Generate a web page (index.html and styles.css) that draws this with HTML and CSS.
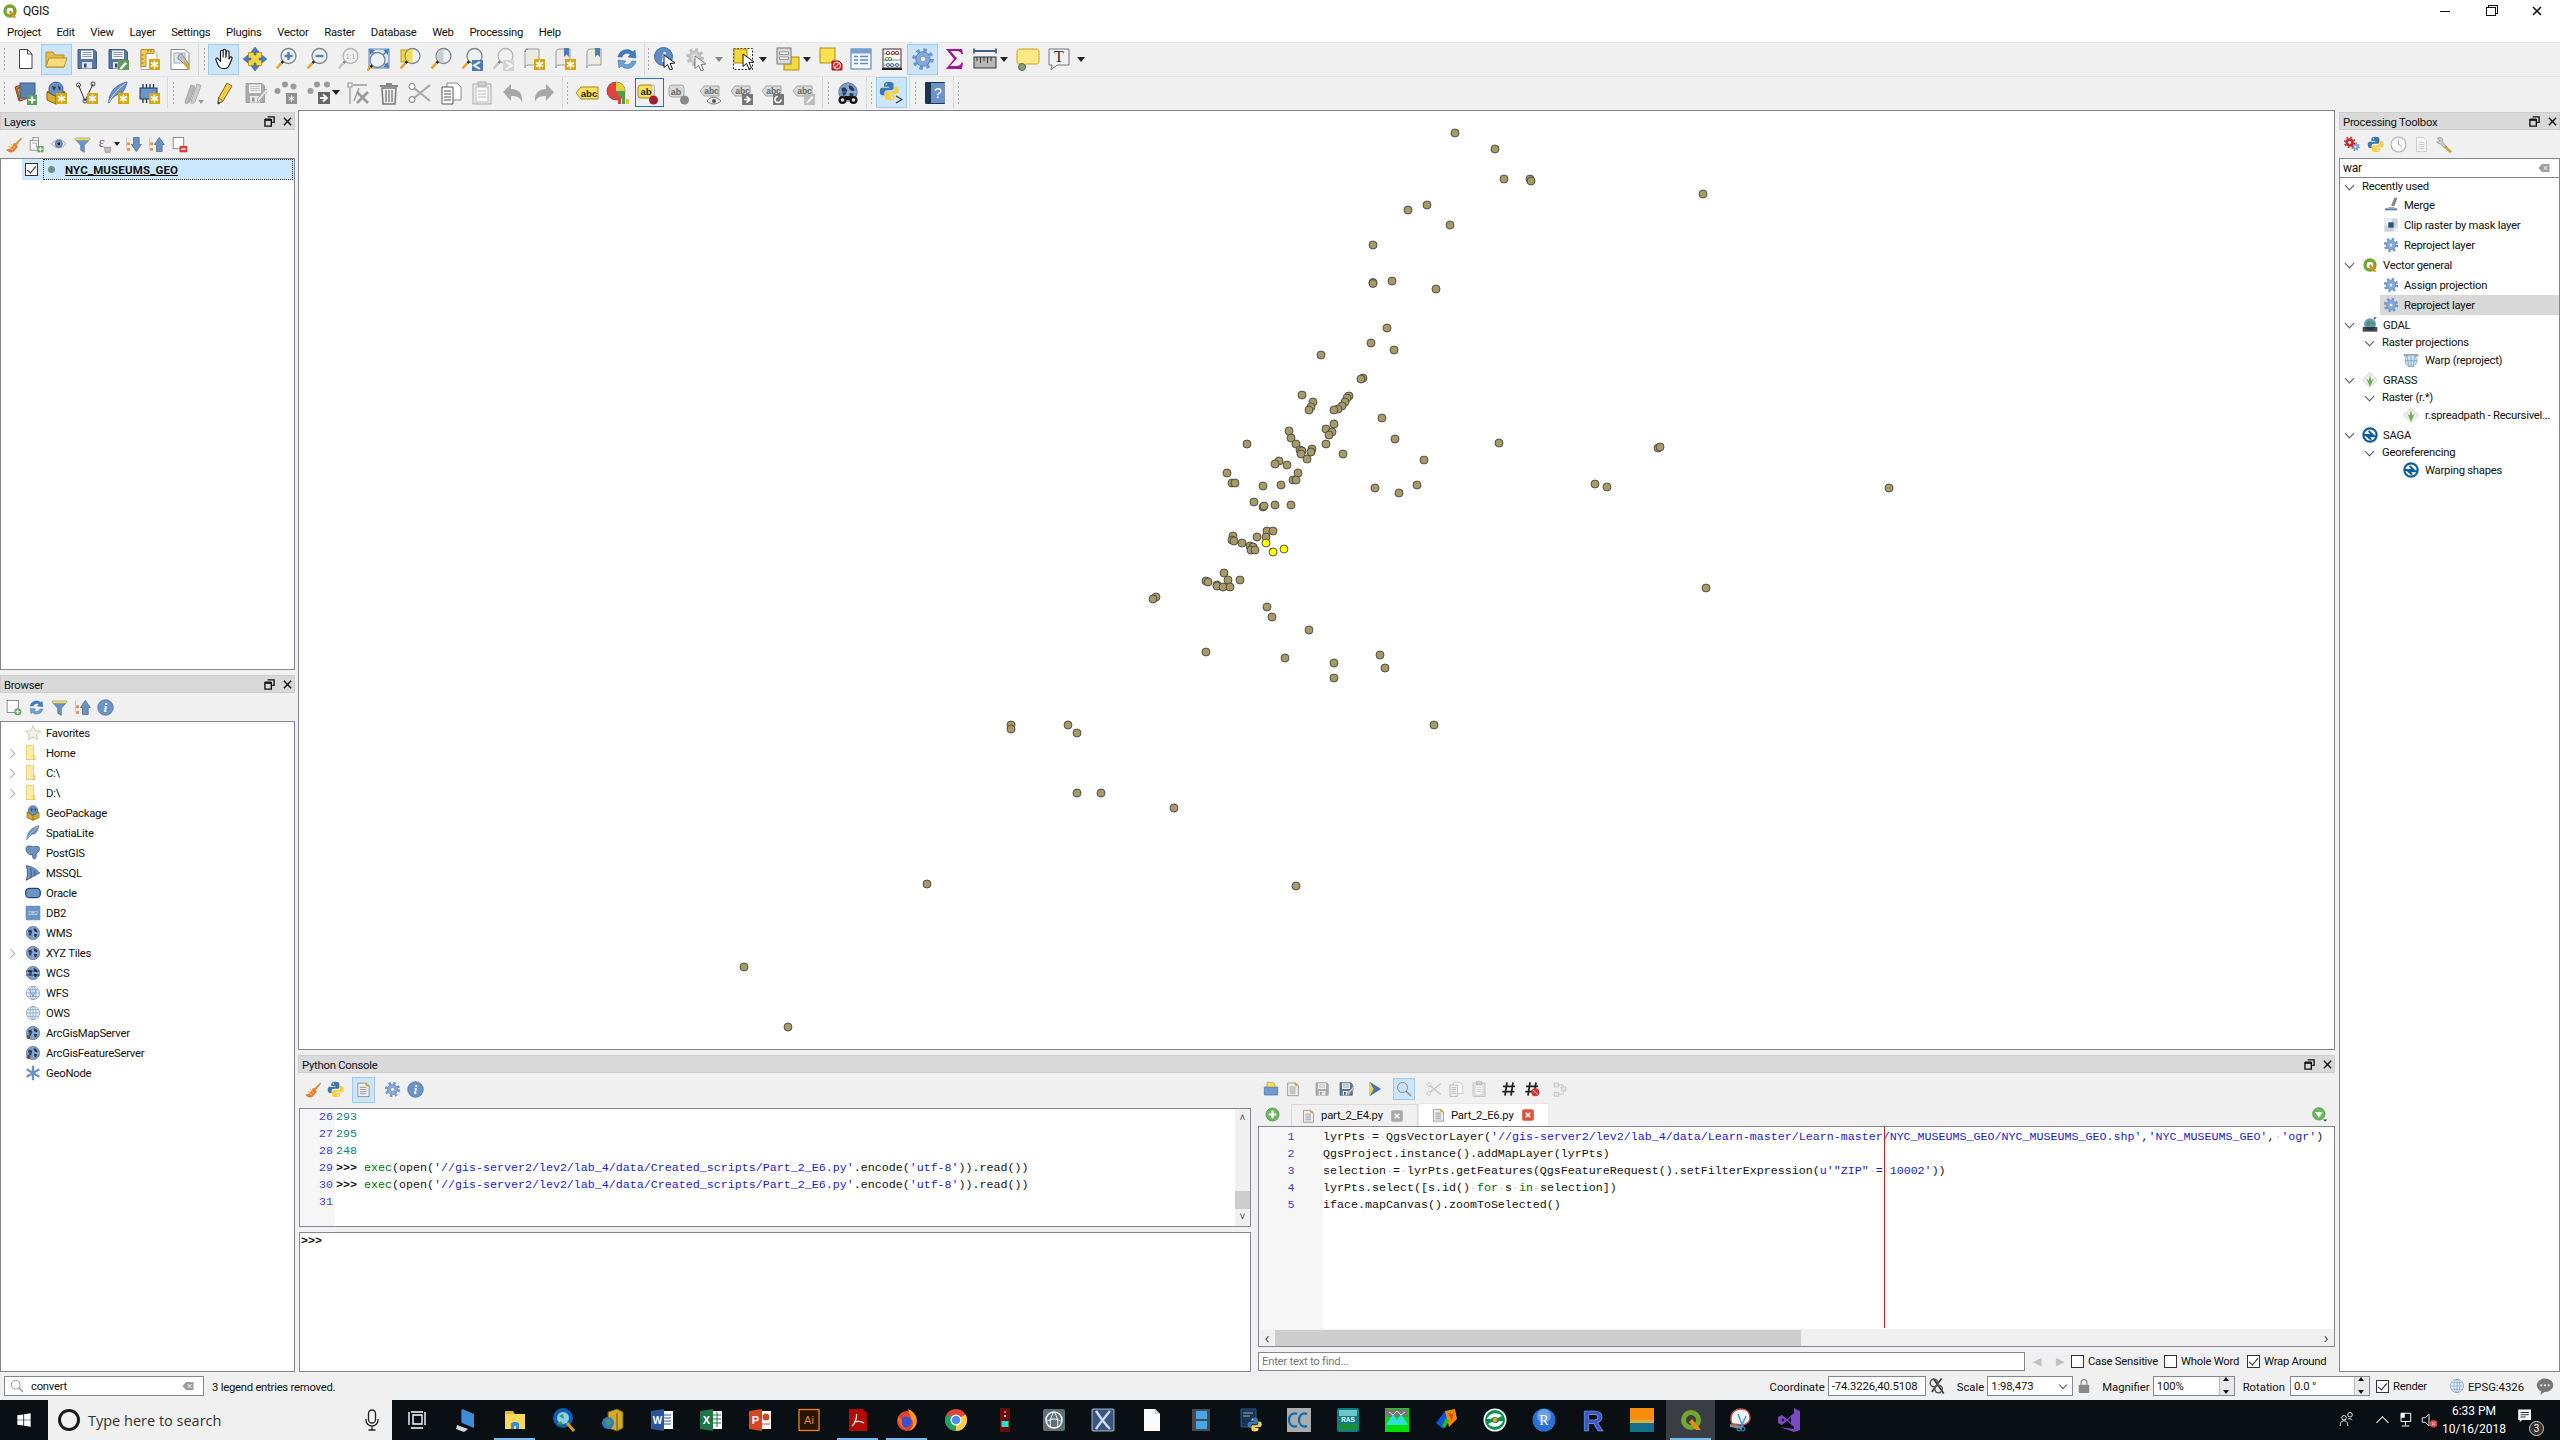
FILE: index.html
```html
<!DOCTYPE html>
<html lang="en">
<head>
<meta charset="utf-8">
<title>QGIS</title>
<link rel="stylesheet" href="styles.css">
</head>
<body>
<svg class="sprite" xmlns="http://www.w3.org/2000/svg">
<symbol id="lens" viewBox="0 0 24 24"><circle cx="14.5" cy="9" r="7.5" fill="#eef1f4" stroke="#7f868c" stroke-width="1.3"/><path d="M9.2 14.3L7.4 16.1" stroke="#222" stroke-width="2.6"/><path d="M7.4 16.1L2.6 21.4" stroke="#e3a72a" stroke-width="2.6"/></symbol>
<symbol id="star" viewBox="0 0 24 24"><rect x="12" y="12" width="11" height="11" fill="#d6a80f"/><path d="M17.5 13.5v8M14 15.5l7 4M21 15.5l-7 4" stroke="#fff" stroke-width="1.5"/></symbol>
<symbol id="gear" viewBox="0 0 24 24"><circle cx="12" cy="12" r="9" fill="none" stroke="#6f97cc" stroke-width="3.6" stroke-dasharray="3.5 3.57"/><circle cx="12" cy="12" r="7.2" fill="#87a9d8" stroke="#5a83ba"/><circle cx="12" cy="12" r="2.8" fill="#eef3fa" stroke="#5a83ba" stroke-width=".7"/></symbol>
<symbol id="globe" viewBox="0 0 24 24"><circle cx="12" cy="12" r="10" fill="#7d9ac4" stroke="#4f6f9e"/><path d="M5 8c3-2 5 0 6 2s-2 4-3 6-3-5-3-8zM13 5c3 0 5 2 6 5-2 2-4 0-5-1s-2-3-1-4zM14 13c2 0 4 0 4 2s-2 4-3 3-2-4-1-5z" fill="#243a5e"/><path d="M2 12h20M12 2v20" stroke="#cdd9ea" stroke-width=".5"/></symbol>
<symbol id="gridglobe" viewBox="0 0 24 24"><circle cx="12" cy="12" r="10" fill="#e8f0f8" stroke="#7d9ac4"/><ellipse cx="12" cy="12" rx="4.5" ry="10" fill="none" stroke="#7d9ac4"/><path d="M2 12h20M3.4 7h17.2M3.4 17h17.2M12 2v20" stroke="#7d9ac4"/></symbol>
<symbol id="new" viewBox="0 0 24 24"><path d="M6.5 2.5h8l4.5 4.5v14.5H6.5z" fill="#fff" stroke="#444" stroke-linejoin="round"/><path d="M14.5 2.5V7H19" fill="none" stroke="#444"/></symbol>
<symbol id="open" viewBox="0 0 24 24"><path d="M2 20V5h7l2 3h9v12z" fill="#e4bb4e" stroke="#b68f27"/><path d="M2 20l3-9h18l-3 9z" fill="#fbdc7c" stroke="#b68f27"/></symbol>
<symbol id="save" viewBox="0 0 24 24"><path d="M3 2.5h16l2.5 2.5v16.5H3z" fill="#56789f" stroke="#3f5e82"/><rect x="6" y="3.5" width="12" height="8.5" fill="#f3f3f3"/><path d="M7.5 5.5h9M7.5 7.5h9M7.5 9.5h9" stroke="#8b9db2"/><rect x="7" y="15" width="10" height="6.5" fill="#dfe4ea"/><rect x="9" y="16.5" width="2.5" height="4" fill="#445"/></symbol>
<symbol id="saveas" viewBox="0 0 24 24"><use href="#save"/><rect x="12" y="13" width="11" height="10" fill="#5d9e5a"/><path d="M14 21l5-6 2 1.5-5 5.5-2.5.5z" fill="#fff"/></symbol>
<symbol id="layout" viewBox="0 0 24 24"><path d="M4 2.5h12l4 4v16H4z" fill="#fff" stroke="#aaa"/><path d="M4 2.5h13v4H9v13H4z" fill="#f1cb5a" stroke="#b99320"/><path d="M4.5 8h2M4.5 12h2M4.5 16h2M11 3v2M14 3v2" stroke="#87691a"/><use href="#star"/></symbol>
<symbol id="layoutm" viewBox="0 0 24 24"><path d="M3 2.5h14l4 4v16H3z" fill="#fff" stroke="#888"/><rect x="6" y="6" width="11" height="10" fill="#dbe6f3" stroke="#9ab"/><path d="M11 8c2-2 4-1 4 1l6 8-2 3-7-7c-2 0-3-2-1-5z" fill="#bfc4c8" stroke="#666" stroke-width=".7"/><path d="M17 14l5 7-2 1.5-5-6z" fill="#d9a62a"/></symbol>
<symbol id="hand" viewBox="0 0 24 24"><path d="M8.5 11V4.5a1.3 1.3 0 012.6 0V10l.1-6.5a1.3 1.3 0 012.6 0l.1 7 .5-5.5a1.3 1.3 0 012.6 0V12l1-1.5c.8-1.2 2.6-.2 2 1-1 2.5-2 5.5-3.5 8-.8 1.3-2 2-3.5 2h-2.5c-2 0-3-1-4-2.5L4 13c-.8-1.5 1-2.5 2-1.5l2.5 3z" fill="#fff" stroke="#111" stroke-width="1.1" stroke-linejoin="round"/></symbol>
<symbol id="pansel" viewBox="0 0 24 24"><rect x="5.5" y="5.5" width="13" height="13" fill="#f3d63c" stroke="#c5a61c"/><path d="M12 0l4 5h-3v3h-2V5H8zM12 24l-4-5h3v-3h2v3h3zM0 12l5-4v3h3v2H5v3zM24 12l-5 4v-3h-3v-2h3V8z" fill="#4d7cb4" stroke="#325a8c" stroke-width=".5"/></symbol>
<symbol id="zin" viewBox="0 0 24 24"><use href="#lens"/><path d="M14.5 5v8M10.5 9h8" stroke="#4f7fb6" stroke-width="2.4"/></symbol>
<symbol id="zout" viewBox="0 0 24 24"><use href="#lens"/><path d="M10.5 9h8" stroke="#4f7fb6" stroke-width="2.4"/></symbol>
<symbol id="z11" viewBox="0 0 24 24"><use href="#lens"/><text x="14.5" y="11.5" class="svgt" font-size="7" text-anchor="middle" fill="#777">1:1</text></symbol>
<symbol id="zfull" viewBox="0 0 24 24"><rect x="2" y="2" width="20" height="19" fill="#dce6f2" stroke="#5b87bc"/><path d="M2 2l6 1-2 2 3 3-1 1-3-3-2 2zM22 2l-1 6-2-2-3 3-1-1 3-3-2-2zM22 21l-6-1 2-2-3-3 1-1 3 3 2-2z" fill="#4d7cb4"/><use href="#lens" x="-4" y="4"/></symbol>
<symbol id="zsel" viewBox="0 0 24 24"><rect x="3" y="3" width="12" height="12" fill="#f3d63c" stroke="#b89c1c"/><use href="#lens"/><path d="M14.5 2a7 7 0 000 14z" fill="#f3d63c" opacity=".85"/></symbol>
<symbol id="zlay" viewBox="0 0 24 24"><use href="#lens"/><path d="M14.5 2a7 7 0 000 14z" fill="#c8cdd2"/></symbol>
<symbol id="zlast" viewBox="0 0 24 24"><use href="#lens"/><path d="M23 13v11H12V13z" fill="#4d7cb4"/><path d="M20 15l-6 3.5 6 3.5" fill="none" stroke="#fff" stroke-width="2"/></symbol>
<symbol id="znext" viewBox="0 0 24 24"><use href="#lens"/><path d="M23 13v11H12V13z" fill="#b9bec4"/><path d="M15 15l6 3.5-6 3.5" fill="none" stroke="#fff" stroke-width="2"/></symbol>
<symbol id="mapv" viewBox="0 0 24 24"><path d="M3 5c0-2 2-3 3-3h11v16H6c-2 0-3 1-3 3z" fill="#eceae5" stroke="#9a9a9a"/><path d="M6 2c-2 0-3 1-3 3" fill="none" stroke="#777"/><use href="#star"/></symbol>
<symbol id="mapb" viewBox="0 0 24 24"><path d="M3 5c0-2 2-3 3-3h11v16H6c-2 0-3 1-3 3z" fill="#eceae5" stroke="#9a9a9a"/><path d="M11 1h5v9l-2.5-2.5L11 10z" fill="#4d7cb4"/></symbol>
<symbol id="map3" viewBox="0 0 24 24"><use href="#mapb"/><use href="#star"/></symbol>
<symbol id="refresh" viewBox="0 0 24 24"><path d="M3 10a9 9 0 0115-5l2-2 1 8-8-1 2.5-2.5A5.5 5.5 0 007 10z" fill="#3f7dc0" stroke="#2d5f97" stroke-width=".5"/><path d="M21 14a9 9 0 01-15 5l-2 2-1-8 8 1-2.5 2.5A5.5 5.5 0 0017 14z" fill="#6ba4d9" stroke="#2d5f97" stroke-width=".5"/></symbol>
<symbol id="cursor" viewBox="0 0 24 24"><path d="M10 9l11 8-5 .5 2.5 5.5-2.5 1-2.5-5.5-3.5 3z" fill="#fff" stroke="#111"/></symbol>
<symbol id="ident" viewBox="0 0 24 24"><circle cx="9.5" cy="9.5" r="9" fill="#5f8cc4" stroke="#3f6ba3"/><text x="9.5" y="15" class="svgt svgi" font-size="15" text-anchor="middle" fill="#fff">i</text><use href="#cursor" y="-1"/></symbol>
<symbol id="action" viewBox="0 0 24 24"><use href="#gear" width="20" height="20"/><circle cx="10" cy="10" r="4" fill="#b8b8b8"/><path d="M8.5 7.5l4 2.5-4 2.5z" fill="#fff"/><use href="#cursor"/></symbol>
<symbol id="select" viewBox="0 0 24 24"><rect x="1.5" y="1.5" width="19" height="21" fill="#fff" stroke="#333" stroke-dasharray="2 1.5"/><rect x="2" y="2" width="13" height="14" fill="#f3d63c" stroke="#a88f1f"/><use href="#cursor" x="1" y="-2"/></symbol>
<symbol id="selform" viewBox="0 0 24 24"><rect x="8" y="10" width="15" height="13" fill="#f5d93c" stroke="#a88f1f"/><rect x="1" y="1" width="14" height="16" fill="#d9d9d9" stroke="#777"/><path d="M3.5 5h9v2.5h-9zM3.5 10h9v2.5h-9z" fill="#fff" stroke="#777" stroke-width=".7"/></symbol>
<symbol id="desel" viewBox="0 0 24 24"><rect x="1" y="1" width="15" height="15" fill="#f7e14d" stroke="#a88f1f"/><path d="M13 23V14h7l3 3v6z" fill="#d8262a" stroke="#a01418"/><circle cx="18" cy="18.5" r="3.5" fill="none" stroke="#fff"/><path d="M15.5 21l5-5" stroke="#fff"/></symbol>
<symbol id="table" viewBox="0 0 24 24"><rect x="2" y="2" width="20" height="20" fill="#f4f7fb" stroke="#5f8cc4" stroke-width="1.2"/><rect x="2" y="2" width="20" height="4.5" fill="#77a0d2"/><path d="M5 9.5h4M5 13h4M5 16.5h4M11 9.5h8M11 13h8M11 16.5h8" stroke="#5f8cc4" stroke-width="1.5"/></symbol>
<symbol id="abacus" viewBox="0 0 24 24"><rect x="3" y="2" width="18" height="19" fill="#fff" stroke="#333"/><path d="M2 22h20" stroke="#222" stroke-width="2"/><path d="M3 7h18M3 13h18M3 18h18" stroke="#888"/><circle cx="8" cy="6" r="1.7" fill="none" stroke="#c0393b"/><circle cx="13" cy="6" r="1.7" fill="none" stroke="#c0393b"/><circle cx="17" cy="6" r="1.7" fill="none" stroke="#c0393b"/><circle cx="7" cy="12" r="1.7" fill="none" stroke="#5a9a48"/><circle cx="10" cy="12" r="1.7" fill="none" stroke="#5a9a48"/><circle cx="8" cy="18" r="1.7" fill="none" stroke="#4f7fb6"/><circle cx="12" cy="18" r="1.7" fill="none" stroke="#4f7fb6"/><circle cx="17" cy="18" r="1.7" fill="none" stroke="#4f7fb6"/></symbol>
<symbol id="sigma" viewBox="0 0 24 24"><path d="M4 2h16l1 5-1.5.2C19 5 17 4 14 4H8.5l6.5 7.5L8 19h6c3 0 5-1 5.5-3.5H21L20 22H4l8-10z" fill="#a0169a"/></symbol>
<symbol id="ruler" viewBox="0 0 24 24"><path d="M1 4h22M1 1.5v5M23 1.5v5" stroke="#3f5f86" stroke-width="1.8" fill="none"/><rect x="1" y="10" width="22" height="11" fill="#b7b7b7" stroke="#333"/><path d="M4 10v4M7.5 10v6M11 10v4M14.5 10v6M18 10v4" stroke="#333"/></symbol>
<symbol id="callout" viewBox="0 0 24 24"><path d="M4 2h16c2 0 3 1 3 3v9c0 2-1 3-3 3H10l-5 3 1-3H4c-2 0-3-1-3-3V5c0-2 1-3 3-3z" fill="#fde985" stroke="#c9a226"/><circle cx="6" cy="20" r="3.5" fill="#7fa56c" stroke="#567"/></symbol>
<symbol id="tbox" viewBox="0 0 24 24"><path d="M2 2h20v16H10l-6 5 1-5H2z" fill="#ecf1f4" stroke="#777"/><text x="12" y="15" class="svgs" font-size="16" text-anchor="middle" fill="#333">T</text></symbol>
<symbol id="dsm" viewBox="0 0 24 24"><path d="M2 6l9-3 4 14-9 3z" fill="#d0793c" stroke="#8d4b22"/><path d="M4 8l8-4 3 13-8 3z" fill="#e4a14c" stroke="#8d4b22"/><rect x="7" y="2" width="15" height="15" fill="#5a82b4" stroke="#3c5f8c"/><rect x="14" y="14" width="10" height="10" fill="#5d9e5a"/><path d="M19 15.5v7M15.5 19h7" stroke="#fff" stroke-width="2"/></symbol>
<symbol id="gpkg" viewBox="0 0 24 24"><path d="M3 11l9-4 9 4v8l-9 4-9-4z" fill="#d6ae2e" stroke="#7a611a"/><path d="M3 11l9 4 9-4M12 15v8" stroke="#7a611a" fill="none"/><circle cx="12" cy="8" r="7" fill="#6e90be" stroke="#3f5f8f"/><path d="M8 5l4 1-2 4zM14 4l3 3-2 3z" fill="#233a5f"/></symbol>
<symbol id="gpkgs" viewBox="0 0 24 24"><use href="#gpkg"/><use href="#star"/></symbol>
<symbol id="shp" viewBox="0 0 24 24"><circle cx="3.5" cy="4" r="2" fill="#fff" stroke="#444"/><circle cx="18" cy="3" r="2" fill="#fff" stroke="#444"/><circle cx="10" cy="20" r="2" fill="#fff" stroke="#444"/><path d="M3.5 4L10 20 18 3" fill="none" stroke="#333"/><use href="#star"/></symbol>
<symbol id="feather" viewBox="0 0 24 24"><path d="M21 1C12 3 6 8 3.5 16L2.5 22l1-.5C6 16 11 13 15 13c3-3 5-7 6-12z" fill="#6e94c4" stroke="#3b5f91" stroke-width=".8"/><path d="M3 21C8 12 13 7 20 2" stroke="#dde6f2" fill="none" stroke-width=".8"/></symbol>
<symbol id="featherS" viewBox="0 0 24 24"><use href="#feather"/><use href="#star"/></symbol>
<symbol id="chip" viewBox="0 0 24 24"><rect x="3" y="7" width="17" height="11" fill="#6d95c7" stroke="#22344f"/><path d="M6 3v4M9.5 3v4M13 3v4M16.5 3v4M6 18v4M9.5 18v4M13 18v4" stroke="#22344f" stroke-width="1.3"/><use href="#star"/></symbol>
<symbol id="pencils" viewBox="0 0 24 24"><path d="M4 21L10 4l4 1.5L8.5 21 5 23z" fill="#8c8c8c" stroke="#666"/><path d="M10 21L16 3l4 1.5L14 21l-3 2z" fill="#b0b0b0" stroke="#777"/></symbol>
<symbol id="pencil" viewBox="0 0 24 24"><path d="M6 23l.5-6L15 2l5 3-9 15z" fill="#f1cb45" stroke="#856b12"/><path d="M6 23l.5-6 4.5 3z" fill="#eed9a6" stroke="#856b12"/><path d="M6 23l.3-2.5 2 1.2z" fill="#222"/></symbol>
<symbol id="saveedit" viewBox="0 0 24 24"><use href="#save"/><path d="M14 22l1-5 8-9 2 2-8 9z" fill="#d6d6d6" stroke="#777"/></symbol>
<symbol id="pts" viewBox="0 0 24 24"><circle cx="11" cy="3.5" r="3" fill="#9a9a9a"/><circle cx="19.5" cy="5.5" r="3" fill="#9a9a9a"/><circle cx="3.5" cy="10" r="3" fill="#9a9a9a"/><rect x="12" y="12" width="11" height="11" fill="#8f8f8f"/><path d="M17.5 14v7M14.5 16l6 3M20.5 16l-6 3" stroke="#fff"/></symbol>
<symbol id="ptsm" viewBox="0 0 24 24"><circle cx="10" cy="3.5" r="3" fill="#9a9a9a"/><circle cx="20" cy="3.5" r="3" fill="#9a9a9a"/><circle cx="3.5" cy="10" r="3" fill="#9a9a9a"/><rect x="11" y="11" width="12" height="12" fill="#666"/><path d="M13 17h5M16 13.5l4 3.5-4 3.5" stroke="#fff" stroke-width="1.8" fill="none"/></symbol>
<symbol id="tools" viewBox="0 0 24 24"><rect x="2" y="2" width="4" height="4" fill="#fff" stroke="#888"/><path d="M7 4h14M4 7v16M8 20l5-13" stroke="#999" stroke-width="1.3"/><path d="M11 11l11 11M22 11L11 22" stroke="#999" stroke-width="2.5"/></symbol>
<symbol id="trash" viewBox="0 0 24 24"><path d="M3 4h18v2H3zM9 2h6v2H9z" fill="#888"/><path d="M5 7h14l-1 16H6z" fill="#eee" stroke="#777" stroke-width="1.5"/><path d="M9 9v12M12 9v12M15 9v12" stroke="#888" stroke-width="1.5"/></symbol>
<symbol id="scis" viewBox="0 0 24 24"><path d="M22 4L6 17M22 20L6 7" stroke="#a8a8a8" stroke-width="2.2"/><circle cx="4" cy="5.5" r="3" fill="#fff" stroke="#777"/><circle cx="4" cy="18.5" r="3" fill="#fff" stroke="#777"/></symbol>
<symbol id="copy" viewBox="0 0 24 24"><path d="M8 2h10l4 4v13H8z" fill="#fff" stroke="#888"/><path d="M3 6h11v17H3z" fill="#fff" stroke="#555"/><path d="M5 10h7M5 13h7M5 16h7M5 19h7" stroke="#555"/></symbol>
<symbol id="paste" viewBox="0 0 24 24"><rect x="3" y="3" width="18" height="20" fill="#e4e4e4" stroke="#777"/><rect x="6" y="6" width="12" height="15" fill="#fff" stroke="#999"/><rect x="8" y="1" width="8" height="4" fill="#bbb" stroke="#777"/><path d="M8 10h8M8 13h8M8 16h8" stroke="#999"/></symbol>
<symbol id="undo" viewBox="0 0 24 24"><path d="M2 11l8-8v5c7 0 12 4 11 13-2-5-5-6-11-6v5z" fill="#a7a7a7"/></symbol>
<symbol id="redo" viewBox="0 0 24 24"><path d="M22 11l-8-8v5C7 8 2 12 3 21c2-5 5-6 11-6v5z" fill="#a7a7a7"/></symbol>
<symbol id="abc" viewBox="0 0 24 24"><path d="M1 12l5-6h17v12H6z" fill="#f8e05c" stroke="#a18a1e"/><text x="14" y="15.5" class="svgt svgb" font-size="9.5" text-anchor="middle" fill="#222">abc</text></symbol>
<symbol id="pie" viewBox="0 0 24 24"><circle cx="10" cy="10" r="9" fill="#e64040" stroke="#333" stroke-width=".6"/><path d="M10 10V1a9 9 0 019 9z" fill="#e2d43a"/><path d="M10 10h9a9 9 0 01-5 8z" fill="#4aa04a"/><rect x="12" y="16" width="3" height="7" fill="#d24040"/><rect x="16" y="13" width="3" height="10" fill="#4aa04a"/><rect x="20" y="18" width="3" height="5" fill="#e2c23a"/></symbol>
<symbol id="labpin" viewBox="0 0 24 24"><rect x="1" y="4" width="16" height="13" rx="3" fill="#f8e05c" stroke="#a18a1e"/><text x="9" y="14" class="svgt svgb" font-size="9.5" text-anchor="middle" fill="#222">ab</text><path d="M15 4h2v12h-2z" fill="#fff" stroke="#999" stroke-width=".6"/><circle cx="16.5" cy="19" r="4.5" fill="#a22029"/></symbol>
<symbol id="labgray" viewBox="0 0 24 24"><path d="M1 10l4-5h15v10H5z" fill="#d8d8d8" stroke="#a5a5a5"/><text x="12.5" y="13" class="svgt svgb" font-size="8.5" text-anchor="middle" fill="#666">abc</text></symbol>
<symbol id="labgray2" viewBox="0 0 24 24"><rect x="1" y="4" width="15" height="12" rx="3" fill="#d8d8d8" stroke="#a5a5a5"/><text x="8" y="13.5" class="svgt svgb" font-size="9" text-anchor="middle" fill="#666">ab</text><circle cx="16.5" cy="19" r="4.5" fill="#8a8a8a"/></symbol>
<symbol id="labeye" viewBox="0 0 24 24"><use href="#labgray"/><path d="M8 20c4-5 9-5 14 0-5 4-10 4-14 0z" fill="#eee" stroke="#777"/><circle cx="15" cy="20" r="2" fill="#555"/></symbol>
<symbol id="labmv" viewBox="0 0 24 24"><use href="#labgray"/><rect x="12" y="13" width="11" height="11" fill="#777"/><path d="M14 18.5h5M16.5 15.5l3.5 3-3.5 3" stroke="#fff" fill="none" stroke-width="1.7"/></symbol>
<symbol id="labrot" viewBox="0 0 24 24"><use href="#labgray"/><rect x="12" y="13" width="11" height="11" fill="#777"/><path d="M20 18.5a3 3 0 11-3-3" stroke="#fff" fill="none" stroke-width="1.5"/></symbol>
<symbol id="labed" viewBox="0 0 24 24"><use href="#labgray"/><rect x="12" y="13" width="11" height="11" fill="#bdbdbd"/><path d="M14 22l6-7 1.5 1.5-6 6z" fill="#fff"/></symbol>
<symbol id="meta" viewBox="0 0 24 24"><use href="#globe" width="22" height="22" x="1"/><circle cx="6.5" cy="19" r="4" fill="#111"/><circle cx="17.5" cy="19" r="4" fill="#111"/><rect x="9" y="15" width="6" height="4" fill="#111"/><circle cx="6.5" cy="19" r="1.8" fill="#ddd"/><circle cx="17.5" cy="19" r="1.8" fill="#ddd"/></symbol>
<symbol id="py" viewBox="0 0 24 24"><path d="M12 1c-4 0-6 1-6 3.5V7h6v1H4C1.5 8 1 10 1 12.5S2 17 4 17h2.500v-3c0-2 1.500-3 3.500-3h5c1.500 0 2.500-1 2.500-2.500V4.500C17.500 2 15.500 1 12 1z" fill="#3f77ad"/><path d="M12.500 23c4 0 6-1 6-3.500V17h-6v-1h8c2.500 0 3-2 3-4.500S22.500 7 20.500 7H18v3c0 2-1.500 3-3.500 3h-5C8 13 7 14 7 15.500v4C7 22 9 23 12.500 23z" fill="#f6cf45"/><circle cx="9" cy="4" r="1" fill="#fff"/><circle cx="15.5" cy="20" r="1" fill="#fff"/></symbol>
<symbol id="pyc" viewBox="0 0 24 24"><use href="#py" width="20" height="20"/><path d="M17 15l6 3.5-6 3.5" fill="none" stroke="#333" stroke-width="1.2"/></symbol>
<symbol id="book" viewBox="0 0 24 24"><rect x="2" y="1" width="20" height="22" rx="1" fill="#1d3450"/><rect x="8" y="2" width="14" height="20" fill="#6c93c3"/><text x="15" y="17" class="svgt" font-size="14" text-anchor="middle" fill="#fff">?</text></symbol>
<symbol id="brush" viewBox="0 0 24 24"><path d="M23 2l-9 9 2.5 2.5L24 4z" fill="#c89540"/><path d="M13 10l5 5-6 7c-4 2-8 0-10-3 4 1 6-1 11-9z" fill="#e67d3c" stroke="#b4592a" stroke-width=".5"/><path d="M5 14l6 6M8 11l6 6" stroke="#f1c24a" stroke-width="1.5"/></symbol>
<symbol id="addgrp" viewBox="0 0 24 24"><rect x="7" y="2" width="8" height="7" fill="#fff" stroke="#777"/><rect x="3" y="6" width="12" height="14" fill="#f4f4f4" stroke="#777"/><path d="M6 10h6v7" fill="none" stroke="#999"/><rect x="13" y="14" width="9" height="9" fill="#6aa466"/><path d="M17.5 15.5v6M14.5 18.5h6" stroke="#fff" stroke-width="1.5"/></symbol>
<symbol id="eye" viewBox="0 0 24 24"><path d="M1 11c6-8 14-8 20 0-6 8-14 8-20 0z" fill="#e6eaee" stroke="#888"/><circle cx="11" cy="11" r="5" fill="#6d93c2" stroke="#3f5f8f"/><circle cx="11" cy="11" r="2" fill="#123"/></symbol>
<symbol id="filter" viewBox="0 0 24 24"><path d="M2 3h20v2l-7.5 8v10l-5-3v-7L2 5z" fill="#6d93c2" stroke="#4a6c9b"/><path d="M2 3h20v3H2z" fill="#f1d653"/></symbol>
<symbol id="eps" viewBox="0 0 24 24"><text x="8" y="15" class="svgs" font-size="20" text-anchor="middle" fill="#7a4a8c">&#949;</text><path d="M12 16h9l-1 7h-7z" fill="#bbb" stroke="#888"/></symbol>
<symbol id="expa" viewBox="0 0 24 24"><path d="M2 3h3M2 3v16h4M2 11h4" stroke="#bba" fill="none"/><rect x="3" y="9" width="4" height="4" fill="#e8923a"/><rect x="3" y="17" width="4" height="4" fill="#e8923a"/><path d="M12 2h8v10h3l-7 10-7-10h3z" fill="#6d93c2" stroke="#3f5f8f"/></symbol>
<symbol id="colla" viewBox="0 0 24 24"><path d="M2 3h3M2 3v16h4M2 11h4" stroke="#bba" fill="none"/><rect x="3" y="9" width="4" height="4" fill="#e8923a"/><rect x="3" y="17" width="4" height="4" fill="#e8923a"/><path d="M12 22h8V12h3L16 2 9 12h3z" fill="#6d93c2" stroke="#3f5f8f"/></symbol>
<symbol id="rmlay" viewBox="0 0 24 24"><rect x="3" y="2" width="15" height="16" fill="#fff" stroke="#666"/><rect x="12" y="14" width="11" height="9" fill="#dd3b3b"/><path d="M14.5 18.5h6" stroke="#fff" stroke-width="2"/></symbol>
<symbol id="addlay" viewBox="0 0 24 24"><rect x="3" y="2" width="16" height="17" fill="#fff" stroke="#666"/><circle cx="18" cy="18" r="5" fill="#6aa466"/><path d="M18 15v6M15 18h6" stroke="#fff" stroke-width="1.5"/></symbol>
<symbol id="info" viewBox="0 0 24 24"><circle cx="12" cy="12" r="11" fill="#6d93c2" stroke="#4a6c9b"/><text x="12" y="18" class="svgt svgi" font-size="17" text-anchor="middle" fill="#fff">i</text></symbol>
<symbol id="pgears" viewBox="0 0 24 24"><use href="#gear" width="14" height="14" x="9" y="8"/><circle cx="8" cy="9" r="6" fill="#c62d2d"/><circle cx="8" cy="9" r="7" fill="none" stroke="#c62d2d" stroke-width="2.5" stroke-dasharray="2.5 3"/><circle cx="8" cy="9" r="2" fill="#fff"/></symbol>
<symbol id="clock" viewBox="0 0 24 24"><circle cx="12" cy="12" r="10.5" fill="#fff" stroke="#aaa" stroke-width="1.5"/><path d="M12 5v7l5 3" fill="none" stroke="#aaa" stroke-width="1.5"/></symbol>
<symbol id="docg" viewBox="0 0 24 24"><path d="M5 2h10l4 4v16H5z" fill="#f5f5f5" stroke="#bbb"/><path d="M8 9h8M8 12h8M8 15h8M8 18h8" stroke="#bbb"/></symbol>
<symbol id="wrench" viewBox="0 0 24 24"><path d="M2 3c3-2 6-1 7 1s1 3 0 4l6 7-3 2-6-6c-2 0-4-1-5-3l3 .5 1.5-2L3 5z" fill="#c6cbcf" stroke="#777" stroke-width=".7"/><path d="M14 14l8 8-2.5 1.5-8-8z" fill="#d9a62a" stroke="#8d6f1a" stroke-width=".5"/></symbol>
<symbol id="qgis" viewBox="0 0 24 24"><path d="M12 2a10 10 0 100 20 10 10 0 000-20zm0 5a5 5 0 110 10 5 5 0 010-10z" fill="#73a82c"/><path d="M13 11l9 11h-5l-7-8z" fill="#eb8c1f"/></symbol>
<symbol id="merge" viewBox="0 0 24 24"><path d="M12 13L17 1h5l-5 13z" fill="#888"/><rect x="3" y="17" width="18" height="3" fill="#5f7fa8"/><path d="M8 15h9v2H8z" fill="#aaa"/></symbol>
<symbol id="clip" viewBox="0 0 24 24"><rect x="2" y="2" width="20" height="20" fill="#c9d4dd"/><rect x="2" y="2" width="11" height="11" fill="#e8edf0"/><rect x="8" y="8" width="8" height="8" fill="#31517a"/><rect x="16" y="16" width="6" height="6" fill="#eef"/></symbol>
<symbol id="gdal" viewBox="0 0 24 24"><circle cx="12" cy="11" r="9" fill="#5f9ccf"/><path d="M6 8l6-2 1 6-5 2zM14 6l5 3-4 5z" fill="#5a8f3c"/><path d="M17 1l5-1-3 4z" fill="#444"/><rect x="1" y="15" width="22" height="7" fill="#1a1a1a" opacity=".8"/></symbol>
<symbol id="warp" viewBox="0 0 24 24"><path d="M1 3h22v4H1z" fill="#9ea9b0"/><circle cx="12" cy="13" r="9" fill="#cfe0ee" stroke="#6e97b9"/><path d="M3 13h18M12 4v18M6 7l3 16M18 7l-3 16" stroke="#6e97b9"/></symbol>
<symbol id="grass" viewBox="0 0 24 24"><path d="M12 1l11 11-11 11L1 12z" fill="#f0f0f0" stroke="#bbb"/><path d="M12 22L6 9l4 4 2-9 2 9 4-4z" fill="#6ab04a"/></symbol>
<symbol id="saga" viewBox="0 0 24 24"><circle cx="12" cy="12" r="10" fill="none" stroke="#0f5c96" stroke-width="3.2"/><path d="M2 12h14l-6-6M22 14H8l6 5" fill="none" stroke="#0f5c96" stroke-width="3"/></symbol>
<symbol id="fav" viewBox="0 0 24 24"><path d="M12 1l3.3 7.5 8 .7-6 5.3 1.800 8L12 18.300 4.900 22.500l1.800-8-6-5.300 8-.7z" fill="#f3f1e8" stroke="#b4b2a2"/></symbol>
<symbol id="dirs" viewBox="0 0 24 24"><rect x="2" y="1" width="11" height="21" fill="#fde9a8" stroke="#e0bf55"/><rect x="13" y="16" width="2" height="6" fill="#fde9a8" stroke="#e0bf55"/></symbol>
<symbol id="pg" viewBox="0 0 24 24"><path d="M3 2c5-1 8 0 9 1 3-2 7-1 9 0 2 3 0 8-4 9 0 3 0 9-3 9-2 0-3-3-3-7-3 2-6 0-8-3C1 8 1 4 3 2z" fill="#6d93c2" stroke="#24476e"/></symbol>
<symbol id="mssql" viewBox="0 0 24 24"><path d="M2 1c8 1 14 4 20 11-6 3-13 7-20 11 2-8 2-14 0-22z" fill="#6d93c2" stroke="#1b3a5c"/><path d="M8 5c2 4 2 10 0 14M14 8c1 3 1 6 0 8" stroke="#1b3a5c" fill="none"/></symbol>
<symbol id="oracle" viewBox="0 0 24 24"><rect x="1" y="5" width="22" height="14" rx="6" fill="#6d93c2" stroke="#24476e" stroke-width="1.8"/></symbol>
<symbol id="db2" viewBox="0 0 24 24"><rect x="1" y="1" width="22" height="22" rx="2" fill="#6d93c2"/><text x="12" y="15" class="svgt" font-size="7.5" text-anchor="middle" fill="#dbe7f5">DB2</text></symbol>
<symbol id="wcs" viewBox="0 0 24 24"><use href="#globe"/><path d="M2 9h20M2 15h20" stroke="#123" stroke-width="1"/></symbol>
<symbol id="wfs" viewBox="0 0 24 24"><use href="#gridglobe"/><path d="M7 7l5 10 5-10" fill="none" stroke="#7d9ac4" stroke-width="1.5"/></symbol>
<symbol id="arc" viewBox="0 0 24 24"><use href="#globe"/><circle cx="5" cy="18" r="3" fill="#555"/></symbol>
<symbol id="geonode" viewBox="0 0 24 24"><path d="M12 1v22M2.5 6.5l19 11M21.500 6.500l-19 11" stroke="#6d93c2" stroke-width="3.5"/></symbol>
<symbol id="mini" viewBox="0 0 24 24"><path d="M4 3h12l4 4v15H4z" fill="#eee" stroke="#777"/><path d="M7 9h9M7 12h9M7 15h9M7 18h9" stroke="#777"/><path d="M15 2l5 5-3 1-3-3z" fill="#d9a62a"/></symbol>
<symbol id="mopen" viewBox="0 0 24 24"><path d="M2 21V9h20v12z" fill="#6d9bd2" stroke="#3f6ba3"/><path d="M6 9V2h9l3 3v4z" fill="#f5d96a" stroke="#b69a2d"/></symbol>
<symbol id="play" viewBox="0 0 24 24"><path d="M4 1l17 11L4 23z" fill="#4773b0"/><path d="M4 1v22l6-11z" fill="#f1cf55"/></symbol>
<symbol id="hash" viewBox="0 0 24 24"><path d="M9 2L6 22M18 2l-3 20M3 8h18M2 16h18" stroke="#222" stroke-width="2.6"/></symbol>
<symbol id="hashx" viewBox="0 0 24 24"><use href="#hash"/><circle cx="17" cy="17" r="6" fill="#d33"/><path d="M14 14l6 6" stroke="#fff" stroke-width="1.5"/></symbol>
<symbol id="branch" viewBox="0 0 24 24"><path d="M3 3h7v6H3zM14 9h7v6h-7zM3 17h7v6H3z" fill="#ddd" stroke="#888"/><path d="M10 6h7v3M10 20h7v-5" fill="none" stroke="#888"/></symbol>
<symbol id="grnplus" viewBox="0 0 24 24"><circle cx="12" cy="12" r="10.5" fill="#6cb85c" stroke="#48853d"/><path d="M12 6v12M6 12h12" stroke="#fff" stroke-width="3.5"/></symbol>
<symbol id="grndn" viewBox="0 0 24 24"><circle cx="11" cy="11" r="10" fill="#6cb85c" stroke="#48853d"/><path d="M5 8h12l-6 9z" fill="#fff"/><path d="M18 20h6l-3 3z" fill="#222"/></symbol>
<symbol id="gclose" viewBox="0 0 24 24"><rect x="2" y="2" width="20" height="20" rx="3" fill="#a8a8a8"/><path d="M8 8l8 8M16 8l-8 8" stroke="#fff" stroke-width="2.6"/></symbol>
<symbol id="rclose" viewBox="0 0 24 24"><rect x="2" y="2" width="20" height="20" rx="3" fill="#d9543a"/><path d="M8 8l8 8M16 8l-8 8" stroke="#fff" stroke-width="2.6"/></symbol>
<symbol id="clear" viewBox="0 0 24 24"><path d="M1 12l7-8h15v16H8z" fill="#9c9c9c"/><path d="M11 8l8 8M19 8l-8 8" stroke="#fff" stroke-width="2"/></symbol>
<symbol id="float" viewBox="0 0 12 12"><path d="M4 1h7v6H9M1 4h7v7H1z" fill="none" stroke="#111" stroke-width="1.5"/><path d="M1 4h7" stroke="#111" stroke-width="2.5"/></symbol>
<symbol id="close" viewBox="0 0 12 12"><path d="M2 2l8 8M10 2l-8 8" stroke="#111" stroke-width="1.6"/></symbol>
<symbol id="search" viewBox="0 0 16 16"><circle cx="6.5" cy="6.5" r="5" fill="none" stroke="#888"/><path d="M10 10l5 5" stroke="#888" stroke-width="1.3"/></symbol>
<symbol id="lock" viewBox="0 0 24 24"><rect x="3" y="10" width="18" height="14" rx="2" fill="#888"/><path d="M7 10V6a5 5 0 0110 0v4" fill="none" stroke="#888" stroke-width="2"/></symbol>
<symbol id="crs" viewBox="0 0 24 24"><path d="M7 2l14 20M18 2L5 20" stroke="#333" stroke-width="2"/><circle cx="8" cy="8" r="5" fill="none" stroke="#555" stroke-width="2"/><circle cx="14" cy="16" r="5" fill="none" stroke="#555" stroke-width="2"/></symbol>
<symbol id="mesg" viewBox="0 0 24 24"><path d="M12 2c6 0 11 4 11 9s-5 9-11 9h-1l-5 4 1-5c-3-1-6-4-6-8 0-5 5-9 11-9z" fill="#777"/><circle cx="7" cy="11" r="1.5" fill="#fff"/><circle cx="12" cy="11" r="1.5" fill="#fff"/><circle cx="17" cy="11" r="1.5" fill="#fff"/></symbol>
<symbol id="win" viewBox="0 0 24 24"><path d="M2 5l9-1.3V11.500H2zM12.200 3.500L22 2v9.500h-9.800zM2 12.500h9v7.800l-9-1.300zM12.200 12.500H22V22l-9.800-1.400z" fill="#fff"/></symbol>
<symbol id="mic" viewBox="0 0 24 24"><rect x="8.5" y="2" width="7" height="13" rx="3.5" fill="none" stroke="#222" stroke-width="1.3"/><path d="M6 11v1a6 6 0 0012 0v-1M12 18v4M8.500 22h7" fill="none" stroke="#222" stroke-width="1.3"/></symbol>
<symbol id="tv" viewBox="0 0 24 24"><path d="M6 4h12M8 7h9v9H8zM20 4v13M4 4v13M6 20h12" fill="none" stroke="#fff" stroke-width="1.4"/></symbol>
<symbol id="tb1" viewBox="0 0 24 24"><path d="M8 1l12 5v14L8 15z" fill="#3f8fd8"/><path d="M8 1v14l-1-1V2z" fill="#1e5fa0"/><path d="M3 17l11 4-4 3-8-3z" fill="#d8d8d8"/></symbol>
<symbol id="tb2" viewBox="0 0 24 24"><path d="M2 6V3h8l2 3z" fill="#e2b43a"/><rect x="2" y="6" width="20" height="15" fill="#fbd75c"/><path d="M8 21v-5c0-1 1-2 4-2s4 1 4 2v5h-3v-3h-2v3z" fill="#2d8fd5"/></symbol>
<symbol id="tb3" viewBox="0 0 24 24"><circle cx="11" cy="10" r="10" fill="#0d5fb0"/><circle cx="11" cy="10" r="6" fill="#8ccdf0"/><path d="M7 8l4-2 1 5zM5 16l4-3 2 4z" fill="#3f9a4a"/><path d="M15 15l7 8" stroke="#d79a2a" stroke-width="3"/></symbol>
<symbol id="tb4" viewBox="0 0 24 24"><path d="M7 4l9-3 6 3v16l-6 3-9-3z" fill="#d2a92a" stroke="#6e5611"/><path d="M16 5v18" stroke="#6e5611"/><circle cx="7" cy="15" r="6" fill="#2e7cc2"/><path d="M4 13l4-2 2 4-3 3z" fill="#4a9a4a"/></symbol>
<symbol id="tbw" viewBox="0 0 24 24"><rect x="9" y="3" width="14" height="18" fill="#fff"/><path d="M11 7h10M11 10h10M11 13h10M11 16h10" stroke="#2b579a"/><path d="M1 3l13-2v22L1 21z" fill="#2b579a"/><text x="7.5" y="16" class="svgt svgb" font-size="10" text-anchor="middle" fill="#fff">W</text></symbol>
<symbol id="tbx" viewBox="0 0 24 24"><rect x="9" y="3" width="14" height="18" fill="#fff"/><path d="M14 7h8M14 11h8M14 15h8M18 4v15" stroke="#217346"/><path d="M1 3l13-2v22L1 21z" fill="#217346"/><text x="7.5" y="16" class="svgt svgb" font-size="11" text-anchor="middle" fill="#fff">X</text></symbol>
<symbol id="tbp" viewBox="0 0 24 24"><rect x="9" y="3" width="14" height="18" fill="#fff"/><circle cx="18" cy="9" r="3.5" fill="#d24726"/><path d="M14 16h8" stroke="#d24726"/><path d="M1 3l13-2v22L1 21z" fill="#d24726"/><text x="7.5" y="16" class="svgt svgb" font-size="11" text-anchor="middle" fill="#fff">P</text></symbol>
<symbol id="tbai" viewBox="0 0 24 24"><rect x="2" y="1.5" width="20" height="21" fill="#2a1402" stroke="#e8821a" stroke-width="1.3"/><text x="12" y="16" class="svgt" font-size="11" text-anchor="middle" fill="#e8821a">Ai</text></symbol>
<symbol id="tbpdf" viewBox="0 0 24 24"><path d="M3 1h14l4 4v18H3z" fill="#b30b00"/><path d="M6 18c3-2 5-8 4.5-12M8 14c4-1 7-1 10 1" fill="none" stroke="#fff" stroke-width="1.2"/></symbol>
<symbol id="tbff" viewBox="0 0 24 24"><circle cx="12" cy="13" r="10" fill="#e0452c"/><circle cx="11" cy="14" r="5.5" fill="#3d4fd0"/><path d="M13 1c7 3 10 9 8 15-1 4-4 6-7 7 4-3 5-8 3-11-1-3-3-6-4-11z" fill="#fd9a1e"/><path d="M3 9c0 6 3 11 9 13-5-3-6-7-5-10z" fill="#fd6a2a"/></symbol>
<symbol id="tbch" viewBox="0 0 24 24"><circle cx="12" cy="12" r="11" fill="#de4636"/><path d="M12 12L2.5 6.5A11 11 0 0012 23z" fill="#1da462"/><path d="M12 12v11A11 11 0 0023 12c0-2-.5-3.5-1.500-5.500z" fill="#ffce42"/><circle cx="12" cy="12" r="5.5" fill="#fff"/><circle cx="12" cy="12" r="4.3" fill="#4c8bf5"/></symbol>
<symbol id="tbrd" viewBox="0 0 24 24"><rect x="7" y="0" width="10" height="24" fill="#6e0b0b"/><rect x="8.5" y="13" width="7" height="6" fill="#28e0d8"/><circle cx="12" cy="8" r="1" fill="#eee"/><circle cx="12" cy="4" r=".8" fill="#eee"/></symbol>
<symbol id="tbsph" viewBox="0 0 24 24"><rect x="1" y="1" width="22" height="22" rx="2" fill="#5e6f78"/><circle cx="12" cy="12" r="8" fill="none" stroke="#fff" stroke-width="1.5"/><path d="M4 14c5-4 11-4 16 0M12 4c-3 4-5 10-3 16M12 4c3 4 5 10 3 16" fill="none" stroke="#fff"/></symbol>
<symbol id="tbx2" viewBox="0 0 24 24"><rect x="1" y="1" width="22" height="22" rx="1" fill="#3a557f" stroke="#c8d4e4" stroke-width=".8"/><path d="M5 3c4 6 9 13 14 18M19 3C15 8 9 15 5 21" stroke="#cfd9e8" stroke-width="2.4" fill="none"/></symbol>
<symbol id="tbdoc" viewBox="0 0 24 24"><path d="M4 1h11l5 5v17H4z" fill="#fafafa"/><path d="M15 1v5h5" fill="#d0d0d0"/></symbol>
<symbol id="tbfilm" viewBox="0 0 24 24"><rect x="3" y="1" width="18" height="22" fill="#4a4a4a"/><rect x="7" y="3" width="11" height="8" fill="#46a6ea"/><rect x="7" y="13" width="11" height="8" fill="#46a6ea"/></symbol>
<symbol id="tbpyf" viewBox="0 0 24 24"><path d="M3 1h15v18H3z" fill="#1c3353" stroke="#2a5a9a"/><path d="M5 5h10M5 8h7" stroke="#8bb"/><use href="#py" width="15" height="15" x="9" y="9"/></symbol>
<symbol id="tbcc" viewBox="0 0 24 24"><rect x="0" y="0" width="24" height="24" fill="#a9adb0"/><path d="M10 6c-5-2-8 2-8 6s3 8 8 6M20 6c-5-2-8 2-8 6s3 8 8 6" fill="none" stroke="#1069ad" stroke-width="2.2"/></symbol>
<symbol id="tbras" viewBox="0 0 24 24"><rect x="1" y="0" width="22" height="24" rx="2" fill="#0b7d83"/><rect x="3" y="2" width="18" height="6" fill="#6ec6c9"/><text x="12" y="14" class="svgt svgb" font-size="6.5" text-anchor="middle" fill="#fff">RAS</text><rect x="3" y="16" width="18" height="6" fill="#1a8f3a"/></symbol>
<symbol id="tbmt" viewBox="0 0 24 24"><rect x="0" y="0" width="24" height="24" fill="#00e000"/><rect x="1" y="1" width="22" height="8" fill="#777"/><path d="M1 17L8 6l4 6 4-6 7 11z" fill="#2fdcd8"/><path d="M4 4l4 3 4-4 4 4 4-3" stroke="#ddd" fill="none"/></symbol>
<symbol id="tb3d" viewBox="0 0 24 24"><path d="M9 21L2 15l9-12 6 2z" fill="#0b57d8"/><path d="M11 3l10-2 2 10-8 8z" fill="#f2840f"/><path d="M8 18l4-8 3 3-4 7z" fill="#1cc21c"/><path d="M14 5l5 1-1 7z" fill="#c9501a"/></symbol>
<symbol id="tbgc" viewBox="0 0 24 24"><circle cx="12" cy="12" r="11.5" fill="#fff"/><circle cx="12" cy="12" r="10" fill="#0a8f4a"/><path d="M4 11c2-6 10-8 15-3l-4 2c-3-2-6-1-7 1zM20 13c-2 6-10 8-15 3l4-2c3 2 6 1 7-1z" fill="#fff"/><circle cx="12" cy="12" r="2.2" fill="#f0a23a"/></symbol>
<symbol id="tbr1" viewBox="0 0 24 24"><circle cx="12" cy="12" r="11.5" fill="#2c6fd0"/><circle cx="12" cy="8" r="7" fill="#7fb4ea" opacity=".7"/><text x="12" y="17" class="svgs" font-size="14" text-anchor="middle" fill="#fff">R</text></symbol>
<symbol id="tbr2" viewBox="0 0 24 24"><text x="12" y="23" class="svgt svgb" font-size="29" text-anchor="middle" fill="#3d55c9" stroke="#8fa3ee" stroke-width=".6">R</text></symbol>
<symbol id="tbgrad" viewBox="0 0 24 24"><rect y="0" width="24" height="12" fill="#f88a0c"/><rect y="12" width="24" height="3" fill="#d9b040"/><rect y="15" width="24" height="9" fill="#14708a"/></symbol>
<symbol id="tbsnip" viewBox="0 0 24 24"><path d="M3 10c0-6 5-9 10-9 6 0 9 4 9 9s-6 7-8 7l-9-1c-2 0-2-4-2-6z" fill="#f2f2f2" stroke="#c45050" stroke-width="1.4"/><path d="M2 16l12 2v3L2 19z" fill="#8a8a8a"/><path d="M10 6l5 13M18 8l-5 11" stroke="#3a9ed8" stroke-width="1.5"/><circle cx="15" cy="21" r="2" fill="none" stroke="#3a9ed8"/><circle cx="11" cy="21" r="2" fill="none" stroke="#3a9ed8"/></symbol>
<symbol id="tbvs" viewBox="0 0 24 24"><path d="M17 0l6 3v19l-6 2-14-5 14 2zM1 9l4-2 5 4 7-6v14l-7-6-5 4-4-2zM5 10v4l2.5-2zM14 9l-3 3 3 3z" fill="#7a48c0"/></symbol>
<symbol id="people" viewBox="0 0 24 24"><circle cx="8" cy="9" r="3" fill="none" stroke="#fff" stroke-width="1.2"/><path d="M3 20c0-5 2-7 5-7s5 2 5 7" fill="none" stroke="#fff" stroke-width="1.2"/><circle cx="16" cy="5" r="3" fill="none" stroke="#fff" stroke-width="1.2"/><path d="M13 11c1-1 5-1 6 1" fill="none" stroke="#fff" stroke-width="1.2"/></symbol>
<symbol id="net" viewBox="0 0 24 24"><path d="M4 3h13v11H4zM10 14v5M5 20h10" fill="none" stroke="#fff" stroke-width="1.3"/><path d="M4 3h5v6H4z" fill="#fff"/></symbol>
<symbol id="vol" viewBox="0 0 24 24"><path d="M3 9h4l5-5v16l-5-5H3z" fill="none" stroke="#fff" stroke-width="1.2"/><circle cx="18" cy="17" r="5" fill="#e04141"/><path d="M16 15l4 4M20 15l-4 4" stroke="#fff" stroke-width="1.2"/></symbol>
<symbol id="note" viewBox="0 0 24 24"><path d="M3 2h17v14H8l-3 3v-3H3z" fill="#fff"/><path d="M6 6h11M6 9h11M6 12h7" stroke="#0a0f14" stroke-width="1.2"/></symbol>
</svg>

<header class="titlebar">
  <svg class="ic16"><use href="#qgis"/></svg>
  <span class="apptitle">QGIS</span>
  <div class="winctl">
    <span class="wbtn"><span class="wmin"></span></span>
    <span class="wbtn"><span class="wres"></span></span>
    <span class="wbtn"><svg class="ic12"><use href="#close"/></svg></span>
  </div>
</header>

<nav class="menubar">
  <span>Project</span><span>Edit</span><span>View</span><span>Layer</span><span>Settings</span><span>Plugins</span><span>Vector</span><span>Raster</span><span>Database</span><span>Web</span><span>Processing</span><span>Help</span>
</nav>

<div class="toolbar row1">
  <i class="grip"></i>
  <b class="tb"><svg><use href="#new"/></svg></b>
  <b class="tb on"><svg><use href="#open"/></svg></b>
  <b class="tb"><svg><use href="#save"/></svg></b>
  <b class="tb"><svg><use href="#saveas"/></svg></b>
  <b class="tb"><svg><use href="#layout"/></svg></b>
  <b class="tb"><svg><use href="#layoutm"/></svg></b>
  <i class="sep"></i><i class="grip"></i>
  <b class="tb on"><svg><use href="#hand"/></svg></b>
  <b class="tb"><svg><use href="#pansel"/></svg></b>
  <b class="tb"><svg><use href="#zin"/></svg></b>
  <b class="tb"><svg><use href="#zout"/></svg></b>
  <b class="tb off"><svg><use href="#z11"/></svg></b>
  <b class="tb"><svg><use href="#zfull"/></svg></b>
  <b class="tb"><svg><use href="#zsel"/></svg></b>
  <b class="tb"><svg><use href="#zlay"/></svg></b>
  <b class="tb"><svg><use href="#zlast"/></svg></b>
  <b class="tb off"><svg><use href="#znext"/></svg></b>
  <b class="tb"><svg><use href="#mapv"/></svg></b>
  <b class="tb"><svg><use href="#map3"/></svg></b>
  <b class="tb"><svg><use href="#mapb"/></svg></b>
  <b class="tb"><svg><use href="#refresh"/></svg></b>
  <i class="sep t"></i><i class="grip t"></i>
  <b class="tb"><svg><use href="#ident"/></svg></b>
  <b class="tb drop w47 gray"><svg class="off"><use href="#action"/></svg></b>
  <b class="tb drop w44"><svg><use href="#select"/></svg></b>
  <b class="tb drop w45"><svg><use href="#selform"/></svg></b>
  <b class="tb w28"><svg><use href="#desel"/></svg></b>
  <b class="tb"><svg><use href="#table"/></svg></b>
  <b class="tb"><svg><use href="#abacus"/></svg></b>
  <b class="tb on"><svg><use href="#gear"/></svg></b>
  <b class="tb"><svg><use href="#sigma"/></svg></b>
  <b class="tb drop w43"><svg><use href="#ruler"/></svg></b>
  <b class="tb"><svg><use href="#callout"/></svg></b>
  <b class="tb drop w47"><svg><use href="#tbox"/></svg></b>
</div>

<div class="toolbar row2">
  <i class="grip"></i>
  <b class="tb"><svg><use href="#dsm"/></svg></b>
  <b class="tb"><svg><use href="#gpkgs"/></svg></b>
  <b class="tb"><svg><use href="#shp"/></svg></b>
  <b class="tb"><svg><use href="#featherS"/></svg></b>
  <b class="tb"><svg><use href="#chip"/></svg></b>
  <i class="sep"></i><i class="grip"></i>
  <b class="tb small off"><svg><use href="#pencils"/></svg></b>
  <b class="tb"><svg><use href="#pencil"/></svg></b>
  <b class="tb off"><svg><use href="#saveedit"/></svg></b>
  <b class="tb w33"><svg><use href="#pts"/></svg></b>
  <b class="tb drop w39"><svg><use href="#ptsm"/></svg></b>
  <b class="tb"><svg><use href="#tools"/></svg></b>
  <b class="tb"><svg><use href="#trash"/></svg></b>
  <b class="tb"><svg><use href="#scis"/></svg></b>
  <b class="tb"><svg><use href="#copy"/></svg></b>
  <b class="tb off"><svg><use href="#paste"/></svg></b>
  <b class="tb"><svg><use href="#undo"/></svg></b>
  <b class="tb"><svg><use href="#redo"/></svg></b>
  <i class="sep"></i><i class="grip"></i>
  <b class="tb"><svg><use href="#abc"/></svg></b>
  <b class="tb"><svg><use href="#pie"/></svg></b>
  <b class="tb sel"><svg><use href="#labpin"/></svg></b>
  <b class="tb"><svg><use href="#labgray2"/></svg></b>
  <b class="tb"><svg><use href="#labeye"/></svg></b>
  <b class="tb"><svg><use href="#labmv"/></svg></b>
  <b class="tb"><svg><use href="#labrot"/></svg></b>
  <b class="tb"><svg><use href="#labed"/></svg></b>
  <i class="sep"></i><i class="grip"></i>
  <b class="tb"><svg><use href="#meta"/></svg></b>
  <i class="sep"></i><i class="grip"></i>
  <b class="tb on"><svg><use href="#pyc"/></svg></b>
  <i class="sep"></i><i class="grip"></i>
  <b class="tb"><svg><use href="#book"/></svg></b>
  <i class="sep"></i><i class="grip"></i>
</div>

<main class="workspace">
  <aside class="col-left">
    <section class="dock layers">
      <div class="dtitle"><span>Layers</span><svg class="dbtn"><use href="#float"/></svg><svg class="dbtn"><use href="#close"/></svg></div>
      <div class="dtools">
        <b class="st"><svg><use href="#brush"/></svg></b>
        <b class="st"><svg><use href="#addgrp"/></svg></b>
        <b class="st"><svg><use href="#eye"/></svg></b>
        <b class="st"><svg><use href="#filter"/></svg></b>
        <b class="st stdrop"><svg><use href="#eps"/></svg></b>
        <b class="st"><svg><use href="#expa"/></svg></b>
        <b class="st"><svg><use href="#colla"/></svg></b>
        <b class="st"><svg><use href="#rmlay"/></svg></b>
      </div>
      <div class="tree">
        <div class="layerrow">
          <span class="chk on"></span>
          <span class="laydot"></span>
          <span class="layname">NYC_MUSEUMS_GEO</span>
        </div>
      </div>
    </section>
    <section class="dock browser">
      <div class="dtitle"><span>Browser</span><svg class="dbtn"><use href="#float"/></svg><svg class="dbtn"><use href="#close"/></svg></div>
      <div class="dtools">
        <b class="st"><svg><use href="#addlay"/></svg></b>
        <b class="st"><svg><use href="#refresh"/></svg></b>
        <b class="st"><svg><use href="#filter"/></svg></b>
        <b class="st"><svg><use href="#colla"/></svg></b>
        <b class="st"><svg><use href="#info"/></svg></b>
      </div>
      <div class="tree btree">
        <div class="brow"><svg><use href="#fav"/></svg>Favorites</div>
        <div class="brow exp"><svg><use href="#dirs"/></svg>Home</div>
        <div class="brow exp"><svg><use href="#dirs"/></svg>C:\</div>
        <div class="brow exp"><svg><use href="#dirs"/></svg>D:\</div>
        <div class="brow"><svg><use href="#gpkg"/></svg>GeoPackage</div>
        <div class="brow"><svg><use href="#feather"/></svg>SpatiaLite</div>
        <div class="brow"><svg><use href="#pg"/></svg>PostGIS</div>
        <div class="brow"><svg><use href="#mssql"/></svg>MSSQL</div>
        <div class="brow"><svg><use href="#oracle"/></svg>Oracle</div>
        <div class="brow"><svg><use href="#db2"/></svg>DB2</div>
        <div class="brow"><svg><use href="#globe"/></svg>WMS</div>
        <div class="brow exp"><svg><use href="#globe"/></svg>XYZ Tiles</div>
        <div class="brow"><svg><use href="#wcs"/></svg>WCS</div>
        <div class="brow"><svg><use href="#wfs"/></svg>WFS</div>
        <div class="brow"><svg><use href="#gridglobe"/></svg>OWS</div>
        <div class="brow"><svg><use href="#arc"/></svg>ArcGisMapServer</div>
        <div class="brow"><svg><use href="#arc"/></svg>ArcGisFeatureServer</div>
        <div class="brow"><svg><use href="#geonode"/></svg>GeoNode</div>
      </div>
    </section>
  </aside>

  <div class="col-center">
    <div class="map">
      <svg class="mapsvg" viewBox="298 110 2037 940">
        <g class="pt">
          <circle cx="1455" cy="133"/><circle cx="1495" cy="149"/><circle cx="1504" cy="179"/><circle cx="1530" cy="179"/><circle cx="1531" cy="181"/><circle cx="1703" cy="194"/><circle cx="1427" cy="205"/><circle cx="1408" cy="210"/><circle cx="1450" cy="225"/><circle cx="1373" cy="245"/><circle cx="1373" cy="282.5"/><circle cx="1373" cy="283.5"/><circle cx="1392" cy="281"/><circle cx="1436" cy="289"/><circle cx="1387" cy="328"/>
          <circle cx="1321" cy="355"/><circle cx="1371" cy="343"/><circle cx="1394" cy="350"/><circle cx="1363" cy="378"/><circle cx="1361" cy="379"/><circle cx="1302" cy="395"/><circle cx="1313" cy="402"/><circle cx="1311" cy="407"/><circle cx="1309" cy="410"/><circle cx="1349" cy="396"/><circle cx="1347" cy="398"/><circle cx="1345" cy="402"/><circle cx="1342" cy="406"/><circle cx="1338" cy="409"/><circle cx="1334" cy="410"/><circle cx="1382" cy="418"/><circle cx="1395" cy="439"/><circle cx="1334" cy="424"/><circle cx="1326" cy="429"/><circle cx="1332" cy="432"/><circle cx="1329" cy="435"/><circle cx="1289" cy="431"/><circle cx="1291" cy="438"/><circle cx="1296" cy="444"/><circle cx="1247" cy="444"/><circle cx="1326" cy="444"/><circle cx="1343" cy="454"/><circle cx="1300" cy="450"/><circle cx="1302" cy="451"/><circle cx="1301" cy="454"/><circle cx="1312" cy="449"/><circle cx="1311" cy="452"/><circle cx="1307" cy="459"/><circle cx="1279" cy="461"/><circle cx="1275" cy="464"/><circle cx="1287" cy="465"/><circle cx="1227" cy="473"/><circle cx="1298" cy="473"/><circle cx="1293" cy="480"/><circle cx="1296" cy="480"/><circle cx="1232" cy="483"/><circle cx="1235" cy="483"/><circle cx="1263" cy="486"/><circle cx="1281" cy="485"/><circle cx="1375" cy="488"/><circle cx="1399" cy="493"/><circle cx="1254" cy="502"/><circle cx="1263" cy="507"/><circle cx="1264" cy="506"/><circle cx="1275" cy="505"/><circle cx="1291" cy="505"/><circle cx="1267" cy="531"/><circle cx="1273" cy="531"/><circle cx="1233" cy="536"/><circle cx="1232" cy="540"/><circle cx="1234" cy="541"/><circle cx="1257" cy="537"/><circle cx="1266" cy="537"/><circle cx="1242" cy="543"/><circle cx="1250" cy="546"/><circle cx="1253" cy="547"/><circle cx="1251" cy="550"/><circle cx="1255" cy="550"/><circle cx="1224" cy="573"/><circle cx="1228" cy="580"/><circle cx="1240" cy="580"/><circle cx="1206" cy="581"/><circle cx="1208" cy="582"/><circle cx="1217" cy="585"/><circle cx="1217" cy="586"/><circle cx="1223" cy="587"/><circle cx="1230" cy="587"/><circle cx="1156" cy="597"/><circle cx="1153" cy="599"/><circle cx="1267" cy="607"/><circle cx="1272" cy="617"/><circle cx="1309" cy="630"/>
          <circle cx="1424" cy="460"/><circle cx="1499" cy="443"/><circle cx="1658" cy="448"/><circle cx="1660" cy="447"/><circle cx="1595" cy="484"/><circle cx="1607" cy="487"/><circle cx="1889" cy="488"/><circle cx="1417" cy="485"/><circle cx="1706" cy="588"/>
          <circle cx="1206" cy="652"/><circle cx="1285" cy="658"/><circle cx="1334" cy="663"/><circle cx="1380" cy="655"/><circle cx="1385" cy="668"/><circle cx="1334" cy="678"/><circle cx="1011" cy="725"/><circle cx="1011" cy="729"/><circle cx="1068" cy="725"/><circle cx="1077" cy="733"/><circle cx="1434" cy="725"/><circle cx="1077" cy="793"/><circle cx="1101" cy="793"/><circle cx="1174" cy="808"/><circle cx="927" cy="884"/><circle cx="1296" cy="886"/><circle cx="744" cy="967"/><circle cx="788" cy="1027"/>
        </g>
        <g class="pt sl"><circle cx="1266" cy="543"/><circle cx="1273" cy="552"/><circle cx="1284" cy="549"/></g>
      </svg>
    </div>

    <section class="dock pydock">
      <div class="dtitle pytitle"><span>Python Console</span><svg class="dbtn"><use href="#float"/></svg><svg class="dbtn"><use href="#close"/></svg></div>
      <div class="pybody">
        <div class="pyleft">
          <div class="ptools ltools">
            <b class="st"><svg><use href="#brush"/></svg></b>
            <b class="st"><svg><use href="#py"/></svg></b>
            <b class="st st-c on"><svg><use href="#mini"/></svg></b>
            <b class="st st-d"><svg><use href="#gear"/></svg></b>
            <b class="st"><svg><use href="#info"/></svg></b>
          </div>
          <div class="code output">
            <div class="cline"><span class="no">26</span><span class="num">293</span></div>
            <div class="cline"><span class="no">27</span><span class="num">295</span></div>
            <div class="cline"><span class="no">28</span><span class="num">248</span></div>
            <div class="cline"><span class="no">29</span><span class="prm">&gt;&gt;&gt;</span> <span class="kw">exec</span>(open(<span class="str">'//gis-server2/lev2/lab_4/data/Created_scripts/Part_2_E6.py'</span>.encode(<span class="str">'utf-8'</span>)).read())</div>
            <div class="cline"><span class="no">30</span><span class="prm">&gt;&gt;&gt;</span> <span class="kw">exec</span>(open(<span class="str">'//gis-server2/lev2/lab_4/data/Created_scripts/Part_2_E6.py'</span>.encode(<span class="str">'utf-8'</span>)).read())</div>
            <div class="cline"><span class="no">31</span></div>
            <div class="vscroll"><span class="arr">&#708;</span><span class="thumb"></span><span class="arr">&#709;</span></div>
          </div>
          <div class="code input"><span class="prm">&gt;&gt;&gt;</span></div>
        </div>
        <div class="pyright">
          <div class="ptools etools">
            <b class="et"><svg><use href="#mopen"/></svg></b>
            <b class="et"><svg><use href="#mini"/></svg></b>
            <b class="et off m7"><svg><use href="#save"/></svg></b>
            <b class="et m2"><svg><use href="#saveedit"/></svg></b>
            <b class="et m7"><svg><use href="#play"/></svg></b>
            <b class="et on m7"><svg><use href="#search"/></svg></b>
            <b class="et off m8"><svg><use href="#scis"/></svg></b>
            <b class="et off"><svg><use href="#copy"/></svg></b>
            <b class="et off m1"><svg><use href="#paste"/></svg></b>
            <b class="et m8"><svg><use href="#hash"/></svg></b>
            <b class="et m1"><svg><use href="#hashx"/></svg></b>
            <b class="et off m6"><svg><use href="#branch"/></svg></b>
          </div>
          <div class="tabs">
            <svg class="tabadd"><use href="#grnplus"/></svg>
            <div class="tab"><svg class="tabic"><use href="#mini"/></svg>part_2_E4.py<svg class="tabx"><use href="#gclose"/></svg></div>
            <div class="tab act"><svg class="tabic"><use href="#mini"/></svg>Part_2_E6.py<svg class="tabx"><use href="#rclose"/></svg></div>
            <svg class="tabcorner"><use href="#grndn"/></svg>
          </div>
          <div class="code editor">
            <div class="vline"></div>
            <div class="eline"><span class="no">1</span>lyrPts<i>·</i>=<i>·</i>QgsVectorLayer(<span class="str">'//gis-server2/lev2/lab_4/data/Learn-master/Learn-master/NYC_MUSEUMS_GEO/NYC_MUSEUMS_GEO.shp'</span>,<span class="str">'NYC_MUSEUMS_GEO'</span>,<i>·</i><span class="str">'ogr'</span>)</div>
            <div class="eline"><span class="no">2</span>QgsProject.instance().addMapLayer(lyrPts)</div>
            <div class="eline"><span class="no">3</span>selection<i>·</i>=<i>·</i>lyrPts.getFeatures(QgsFeatureRequest().setFilterExpression(<span class="str">u'"ZIP"<i>·</i>=<i>·</i>10002'</span>))</div>
            <div class="eline"><span class="no">4</span>lyrPts.select([s.id()<i>·</i><span class="kw">for</span><i>·</i>s<i>·</i><span class="kw">in</span><i>·</i>selection])</div>
            <div class="eline"><span class="no">5</span>iface.mapCanvas().zoomToSelected()</div>
            <div class="hscroll"><span class="harr">&#8249;</span><span class="hthumb"></span><span class="harr">&#8250;</span></div>
          </div>
          <div class="find">
            <span class="findinput">Enter text to find...</span>
            <span class="fnav">&#9664;</span><span class="fnav">&#9654;</span>
            <label class="fchk w93"><span class="chk"></span>Case Sensitive</label>
            <label class="fchk w83"><span class="chk"></span>Whole Word</label>
            <label class="fchk"><span class="chk on"></span>Wrap Around</label>
          </div>
        </div>
      </div>
    </section>
  </div>

  <aside class="col-right">
    <section class="dock toolbox">
      <div class="dtitle"><span>Processing Toolbox</span><svg class="dbtn"><use href="#float"/></svg><svg class="dbtn"><use href="#close"/></svg></div>
      <div class="dtools">
        <b class="st"><svg><use href="#pgears"/></svg></b>
        <b class="st"><svg><use href="#py"/></svg></b>
        <b class="st"><svg><use href="#clock"/></svg></b>
        <b class="st"><svg><use href="#docg"/></svg></b>
        <b class="st"><svg><use href="#wrench"/></svg></b>
      </div>
      <div class="boxsearch">war<svg class="clr"><use href="#clear"/></svg></div>
      <div class="tree ptree">
        <div class="pr h17 l0"><u class="ch"></u>Recently used</div>
        <div class="pr l2"><svg><use href="#merge"/></svg>Merge</div>
        <div class="pr l2"><svg><use href="#clip"/></svg>Clip raster by mask layer</div>
        <div class="pr l2"><svg><use href="#gear"/></svg>Reproject layer</div>
        <div class="pr l1"><u class="ch"></u><svg><use href="#qgis"/></svg>Vector general</div>
        <div class="pr l2"><svg><use href="#gear"/></svg>Assign projection</div>
        <div class="pr l2 hi"><svg><use href="#gear"/></svg>Reproject layer</div>
        <div class="pr l1"><u class="ch"></u><svg><use href="#gdal"/></svg>GDAL</div>
        <div class="pr h15 l1b"><u class="ch"></u>Raster projections</div>
        <div class="pr l3"><svg><use href="#warp"/></svg>Warp (reproject)</div>
        <div class="pr l1"><u class="ch"></u><svg><use href="#grass"/></svg>GRASS</div>
        <div class="pr h15 l1b"><u class="ch"></u>Raster (r.*)</div>
        <div class="pr l3"><svg><use href="#grass"/></svg>r.spreadpath - Recursivel...</div>
        <div class="pr l1"><u class="ch"></u><svg><use href="#saga"/></svg>SAGA</div>
        <div class="pr h15 l1b"><u class="ch"></u>Georeferencing</div>
        <div class="pr l3"><svg><use href="#saga"/></svg>Warping shapes</div>
      </div>
    </section>
  </aside>
</main>

<footer class="statusbar">
  <div class="locator"><svg class="ic14"><use href="#search"/></svg><span class="loctext">convert</span><svg class="clr"><use href="#clear"/></svg></div>
  <span class="msg">3 legend entries removed.</span>
  <span class="spacer"></span>
  <span class="lbl">Coordinate</span><span class="field fcoord">-74.3226,40.5108</span><svg class="ic18 m-crs"><use href="#crs"/></svg>
  <span class="lbl">Scale</span><span class="field fscale">1:98,473<em class="caret"></em></span><svg class="ic14 m-lock"><use href="#lock"/></svg>
  <span class="lbl m-mag">Magnifier</span><span class="field fmag">100%<em class="spin"></em></span>
  <span class="lbl m-rot">Rotation</span><span class="field frot">0.0 °<em class="spin"></em></span>
  <label class="fchk m-rnd"><span class="chk on"></span>Render</label>
  <svg class="ic16 m-globe"><use href="#gridglobe"/></svg><span class="lbl">EPSG:4326</span>
  <svg class="ic18 m-msg"><use href="#mesg"/></svg>
</footer>

<div class="taskbar">
  <span class="startbtn"><svg><use href="#win"/></svg></span>
  <div class="tsearch"><span class="ring"></span><span class="tstext">Type here to search</span><svg class="ic24 mic"><use href="#mic"/></svg></div>
  <div class="apps">
    <span class="app"><svg><use href="#tv"/></svg></span>
    <span class="app"><svg><use href="#tb1"/></svg></span>
    <span class="app run"><svg><use href="#tb2"/></svg></span>
    <span class="app"><svg><use href="#tb3"/></svg></span>
    <span class="app"><svg><use href="#tb4"/></svg></span>
    <span class="app"><svg><use href="#tbw"/></svg></span>
    <span class="app"><svg><use href="#tbx"/></svg></span>
    <span class="app"><svg><use href="#tbp"/></svg></span>
    <span class="app"><svg><use href="#tbai"/></svg></span>
    <span class="app run"><svg><use href="#tbpdf"/></svg></span>
    <span class="app run"><svg><use href="#tbff"/></svg></span>
    <span class="app"><svg><use href="#tbch"/></svg></span>
    <span class="app"><svg><use href="#tbrd"/></svg></span>
    <span class="app"><svg><use href="#tbsph"/></svg></span>
    <span class="app"><svg><use href="#tbx2"/></svg></span>
    <span class="app"><svg><use href="#tbdoc"/></svg></span>
    <span class="app"><svg><use href="#tbfilm"/></svg></span>
    <span class="app"><svg><use href="#tbpyf"/></svg></span>
    <span class="app"><svg><use href="#tbcc"/></svg></span>
    <span class="app"><svg><use href="#tbras"/></svg></span>
    <span class="app"><svg><use href="#tbmt"/></svg></span>
    <span class="app"><svg><use href="#tb3d"/></svg></span>
    <span class="app"><svg><use href="#tbgc"/></svg></span>
    <span class="app"><svg><use href="#tbr1"/></svg></span>
    <span class="app"><svg><use href="#tbr2"/></svg></span>
    <span class="app"><svg><use href="#tbgrad"/></svg></span>
    <span class="app run cur"><svg><use href="#qgis"/></svg></span>
    <span class="app"><svg><use href="#tbsnip"/></svg></span>
    <span class="app"><svg><use href="#tbvs"/></svg></span>
  </div>
  <div class="tray">
    <svg class="ic18 t-people"><use href="#people"/></svg>
    <span class="chev"></span>
    <svg class="ic18 t-net"><use href="#net"/></svg>
    <svg class="ic18 t-vol"><use href="#vol"/></svg>
    <div class="clock"><span>6:33 PM</span><span>10/16/2018</span></div>
    <span class="notif"><svg class="ic18"><use href="#note"/></svg><span class="badge">3</span></span>
  </div>
</div>
</body>
</html>
```

FILE: styles.css
```css
*{box-sizing:border-box}
html,body{margin:0;padding:0}
body{width:2560px;height:1440px;overflow:hidden;display:flex;flex-direction:column;background:#f0f0f0;font-family:Roboto,"Liberation Sans",sans-serif;font-size:11.3px;letter-spacing:-.25px;color:#111}
.sprite{display:none}
.svgt{font-family:"Liberation Sans",sans-serif;letter-spacing:0}
.svgb{font-weight:700}
.svgi{font-style:italic;font-family:"Liberation Serif",serif;font-weight:700}
.svgs{font-family:"Liberation Serif",serif;letter-spacing:0}
.ic12{width:12px;height:12px}
.ic14{width:14px;height:14px}
.ic16{width:16px;height:16px}
.ic18{width:18px;height:18px}
.ic24{width:24px;height:24px}

.titlebar{height:22px;background:#fff;display:flex;align-items:center;padding-left:2px;flex:none}
.apptitle{margin-left:5px;font-size:12px}
.winctl{margin-left:auto;display:flex}
.wbtn{width:46px;height:22px;display:flex;align-items:center;justify-content:center}
.wmin{width:10px;border-top:1px solid #111}
.wres{width:10px;height:9px;border:1px solid #111;box-shadow:2px -2px 0 -1px #fff,2px -2px 0 0 #111}

.menubar{height:20px;background:#fff;display:flex;align-items:center;gap:15.7px;padding-left:7px;flex:none}

.toolbar{display:flex;align-items:center;background:#f0f0f0;height:34px;border-top:1px solid #e4e4e4;flex:none}
.row1{padding-bottom:1px}
.row2{border-bottom:2px solid #f0f0f0}
.tb{width:31px;height:31px;display:flex;align-items:center;justify-content:flex-start;padding-left:3.5px;font-weight:400;position:relative;flex:none}
.tb svg{width:24px;height:24px}
.tb.on{background:#cce4f7;border:1px solid #9ccbf0;padding-left:2.5px}
.tb.sel{outline:1px solid #1f73d8;outline-offset:-2px}
.tb.w28{width:28px;padding-left:2px}
.tb.w33{width:33px}
.tb.w39{width:39px}
.tb.w43{width:43px}
.tb.w44{width:44px}
.tb.w45{width:45px}
.tb.w47{width:47px}
.tb.drop::after{content:"";margin-left:3px;border:4px solid transparent;border-top:5px solid #222;border-bottom:0}
.tb.w39::after{margin-left:1px}
.tb.w47::after{margin-left:6px}
.tb.gray::after{border-top-color:#888}
.tb.small::after{content:"";position:absolute;left:21px;bottom:4px;border:3px solid transparent;border-top:4px solid #555;border-bottom:0}
.off{opacity:.55;filter:grayscale(1)}
.sep{width:1px;height:31px;background:#d6d6d6;margin:0 2px 0 2.5px;flex:none}
.grip{width:3px;height:24px;margin:0 2.5px 0 1.5px;flex:none;background-image:radial-gradient(circle,#a6a6a6 .9px,transparent 1px);background-size:3px 4px}
.toolbar>.grip:first-child{margin:0 3.5px 0 3px}
.sep.t{margin:0 1px 0 2px}
.grip.t{margin:0 0 0 1px}

.workspace{height:1262px;display:flex;flex:none;background:#f0f0f0}
.col-left{width:295px;margin-right:3px;padding-top:2px;display:flex;flex-direction:column;gap:5px;flex:none}
.col-center{width:2037px;flex:none;display:flex;flex-direction:column;gap:5px}
.col-right{width:221px;margin-left:4px;padding-top:2px;flex:none;display:flex}

.dock{display:flex;flex-direction:column;min-height:0}
.layers{height:558px}
.browser{height:697px}
.toolbox{width:100%;height:1260px}
.dtitle{height:18px;background:#d9d9d9;border:1px solid #cdcdcd;display:flex;align-items:center;padding-left:3px;gap:6px;flex:none}
.dtitle span{margin-right:auto;padding-top:2px}
.dbtn{width:11px;height:11px;margin-right:1px}
.dtools{height:28px;display:flex;align-items:center;flex:none;padding-left:2px}
.st{width:23px;height:26px;display:flex;align-items:center;justify-content:center;flex:none;font-weight:400}
.st svg{width:17px;height:17px}
.stdrop{width:28px;justify-content:flex-start;padding-left:2px}
.stdrop::after{content:"";margin-left:1px;border:3.5px solid transparent;border-top:4px solid #222;border-bottom:0}
.st.on{background:#cce4f7;border:1px solid #9ccbf0}
.tree{background:#fff;border:1px solid #828790;flex:1;min-height:0}

.layerrow{margin-left:21px;height:21px;background:#cce8ff;display:flex;align-items:center;position:relative;padding-left:3px}
.layerrow::after{content:"";position:absolute;left:21px;right:1px;top:0;bottom:0;border:1px dotted #333}
.chk{width:13px;height:13px;border:1px solid #333;background:#fff;flex:none;display:inline-block;position:relative}
.chk.on::after{content:"";position:absolute;left:3px;top:0;width:4px;height:8px;border:solid #222;border-width:0 1.3px 1.3px 0;transform:rotate(40deg)}
.laydot{width:7px;height:7px;border-radius:50%;background:#6f9186;margin-left:10px;flex:none}
.layname{font-weight:700;text-decoration:underline;margin-left:10px;font-size:11.5px;letter-spacing:.15px}

.btree{padding-top:1px}
.brow{height:20px;display:flex;align-items:center;padding-left:24px;position:relative}
.brow svg{width:16px;height:16px;margin-right:5px}
.exp::before{content:"";position:absolute;left:6px;top:7px;width:6px;height:6px;border:solid #b0b0b0;border-width:1.5px 1.5px 0 0;transform:rotate(45deg)}

.map{height:940px;background:#fff;border:1px solid #828790;flex:none;position:relative;overflow:hidden}
.mapsvg{position:absolute;left:-1px;top:-1px;width:2037px;height:940px}
.pt circle{r:4px;fill:#a89a68;stroke:#47473f;stroke-width:.9}
.pt.sl circle{fill:#ffff00}

.pydock{height:317px;flex:none}
.pybody{display:flex;flex:1;min-height:0;padding-top:1px}
.pyleft{width:952px;margin-left:1px;display:flex;flex-direction:column;flex:none}
.pyright{width:1077px;margin-left:7px;flex:none;display:flex;flex-direction:column}
.ptools{display:flex;align-items:center;height:34px;flex:none;padding-left:2px}
.ltools{padding-bottom:3px}
.st-c{margin-left:4.5px}
.st-d{margin-left:6px}
.code{font-family:"Liberation Mono",monospace;font-size:11.66px;letter-spacing:0;background:#fff;border:1px solid #828790}
.output{height:119px;position:relative;flex:none;padding-right:16px}
.output::before{content:"";position:absolute;left:0;top:0;bottom:0;width:35px;background:#f6f6f6}
.cline{height:17px;line-height:17px;position:relative;white-space:pre}
.cline .no{display:inline-block;width:33px;text-align:right;color:#3f3fd8;margin-right:3px}
.num{color:#128080}
.prm{font-weight:700;color:#111}
.kw{color:#007000}
.str{color:#1a1ad8}
.vscroll{position:absolute;right:0;top:0;bottom:0;width:15px;background:#f0f0f0;display:flex;flex-direction:column;align-items:center;font-family:"Liberation Sans",sans-serif;color:#444;padding-top:2px}
.arr{height:14px;line-height:14px;font-size:10px}
.thumb{margin-top:66px;width:15px;height:18px;background:#cdcdcd;margin-bottom:1px}
.input{flex:1;margin-top:5px;padding:1px}

.etools{height:29px;padding-left:2px}
.et{width:22px;height:22px;display:flex;align-items:center;justify-content:center;font-weight:400;flex:none}
.et svg{width:16px;height:16px}
.et.on{background:#cce4f7;border:1px solid #9ccbf0}
.m1{margin-left:1px}
.m2{margin-left:2px}
.m6{margin-left:6px}
.m7{margin-left:7px}
.m8{margin-left:8px}
.tabs{height:23px;display:flex;align-items:flex-end;flex:none;padding-left:7px}
.tabadd{width:15px;height:15px;margin:0 11px 4px 0}
.tab{height:22px;display:flex;align-items:center;width:127px;padding-left:9px;background:#f0f0f0;border:1px solid #d9d9d9;border-bottom:0;letter-spacing:-.2px}
.tab.act{background:#fff;height:23px;width:131px;padding-left:12px;border-color:#e8e8e8}
.tabic{width:15px;height:16px;margin-right:5px;flex:none}
.tabx{width:14px;height:14px;margin:0 13px 0 auto;flex:none}
.tabcorner{width:15px;height:15px;margin:0 8px 4px auto}
.editor{height:221px;position:relative;flex:none;background:linear-gradient(90deg,#f6f6f6 64px,#fff 64px);padding-top:2px}
.eline{height:17px;line-height:17px;position:relative;color:#111;white-space:pre}
.eline i{font-style:normal;color:#c6c6c6}
.eline .no{display:inline-block;width:64px;text-align:center;color:#3f3fd8}
.vline{position:absolute;left:625px;top:0;height:201px;width:1px;background:#c82020;z-index:1}
.hscroll{position:absolute;left:0;right:0;bottom:0;height:17px;background:#f0f0f0;display:flex;align-items:center;font-family:"Liberation Sans",sans-serif;color:#444;font-size:14px}
.harr{width:16px;text-align:center;flex:none}
.hthumb{width:526px;height:16px;background:#cdcdcd}
.harr:last-child{margin-left:auto}
.find{display:flex;align-items:center;height:19px;margin-top:5px;flex:none}
.findinput{width:767px;height:19px;background:#fff;border:1px solid #828790;line-height:17px;padding-left:3px;color:#777;flex:none}
.fnav{width:23px;text-align:center;color:#c0c0c0;font-size:11px;flex:none}
.fchk{display:flex;align-items:center;gap:4px;flex:none;white-space:nowrap}
.w93{width:93px}
.w83{width:83px}

.statusbar{height:28px;display:flex;align-items:center;padding:0 0 0 4px;flex:none;background:#f0f0f0}
.locator{width:200px;height:20px;background:#fff;border:1px solid #828790;display:flex;align-items:center;padding:0 8px 0 5px;flex:none}
.loctext{margin-left:7px;padding-top:1px}
.clr{width:14px;height:12px;margin-left:auto;flex:none}
.msg{margin-left:8px;padding-top:2px}
.spacer{flex:1}
.lbl{white-space:nowrap;letter-spacing:0;padding-top:2px}
.m-rnd{padding-top:1px}
.field{height:20px;background:#fff;border:1px solid #828790;line-height:20px;padding-left:3px;margin-left:3px;flex:none;position:relative;letter-spacing:-.1px}
.fcoord{width:98px}
.fscale{width:86px}
.fmag{width:82px}
.frot{width:80px;margin-left:5px}
.caret{position:absolute;right:6px;top:5px;width:6px;height:6px;border:solid #555;border-width:0 1px 1px 0;transform:rotate(45deg)}
.spin{position:absolute;right:0;top:0;bottom:0;width:15px;background:linear-gradient(#e8e8e8 49%,#888 49%,#888 51%,#e8e8e8 51%);border-left:1px solid #bbb}
.spin::before,.spin::after{content:"";position:absolute;left:3px;border:3.5px solid transparent}
.spin::before{top:0;border-bottom:4px solid #111;border-top:0}
.spin::after{bottom:1px;border-top:4px solid #111;border-bottom:0}
.m-crs{margin:0 11px 0 2px}
.m-lock{margin-left:4px}
.m-mag{margin-left:11px}
.m-rot{margin-left:8px}
.m-rnd{margin-left:6px}
.m-globe{margin:0 3px 0 22px}
.m-msg{margin:0 6px 0 12px}

.boxsearch{height:20px;background:#fff;border:1px solid #828790;display:flex;align-items:center;padding:0 8px 0 3px;flex:none;font-size:12px}
.ptree{border-top:0}
.pr{height:20px;display:flex;align-items:center;white-space:nowrap}
.pr svg{width:16px;height:16px;flex:none}
.h17{height:17px}
.h15{height:15px}
.ch{width:8px;height:8px;flex:none;position:relative;text-decoration:none}
.ch::before{content:"";position:absolute;left:1px;top:-1px;width:6px;height:6px;border:solid #555;border-width:0 1.3px 1.3px 0;transform:rotate(45deg)}
.l0{padding-left:5px}
.l0 .ch{margin-right:9px}
.l1{padding-left:5px}
.l1 .ch{margin-right:9px}
.l1 svg{margin-right:5px}
.l1b{padding-left:25px}
.l1b .ch{margin-right:9px}
.l2{padding-left:43px}
.l2 svg{margin-right:5px}
.l3{padding-left:63px}
.l3 svg{margin-right:6px}
.hi{background:linear-gradient(90deg,transparent 40px,#d8d8d8 40px)}

.taskbar{height:40px;background:#0a0f14;display:flex;flex:none;align-items:stretch;letter-spacing:0}
.startbtn{width:48px;display:flex;align-items:center;justify-content:center;flex:none}
.startbtn svg{width:16px;height:16px}
.tsearch{width:344px;background:#f0f0f0;display:flex;align-items:center;padding-left:10px;flex:none}
.ring{width:22px;height:22px;border:3px solid #1a1a1a;border-radius:50%;flex:none}
.tstext{margin-left:8px;font-family:"Open Sans",sans-serif;font-size:14.5px;color:#333;white-space:nowrap}
.mic{margin-left:auto;margin-right:8px}
.apps{display:flex;flex:none;width:1416px}
.app{width:49px;display:flex;align-items:center;justify-content:center;position:relative;flex:none}
.app svg{width:24px;height:24px}
.app.run::after{content:"";position:absolute;left:4px;right:4px;bottom:0;height:2px;background:#76b9ed}
.app.cur{background:#3a3e44}
.tray{flex:1;display:flex;align-items:center;color:#fff}
.t-people{margin-left:530px}
.chev{width:9px;height:9px;border:solid #fff;border-width:1.3px 0 0 1.3px;transform:rotate(45deg);margin:4px 0 0 22px;flex:none}
.t-net{margin-left:11px}
.t-vol{margin-left:4px}
.clock{display:flex;flex-direction:column;align-items:center;line-height:18px;margin-left:2px;width:68px;font-size:12px}
.notif{margin-left:8px;position:relative;width:22px;height:24px;display:flex}
.badge{position:absolute;right:-6px;bottom:-4px;width:15px;height:15px;border:1px solid #ccc;border-radius:50%;background:#333;font-size:10px;line-height:13px;text-align:center}
```
